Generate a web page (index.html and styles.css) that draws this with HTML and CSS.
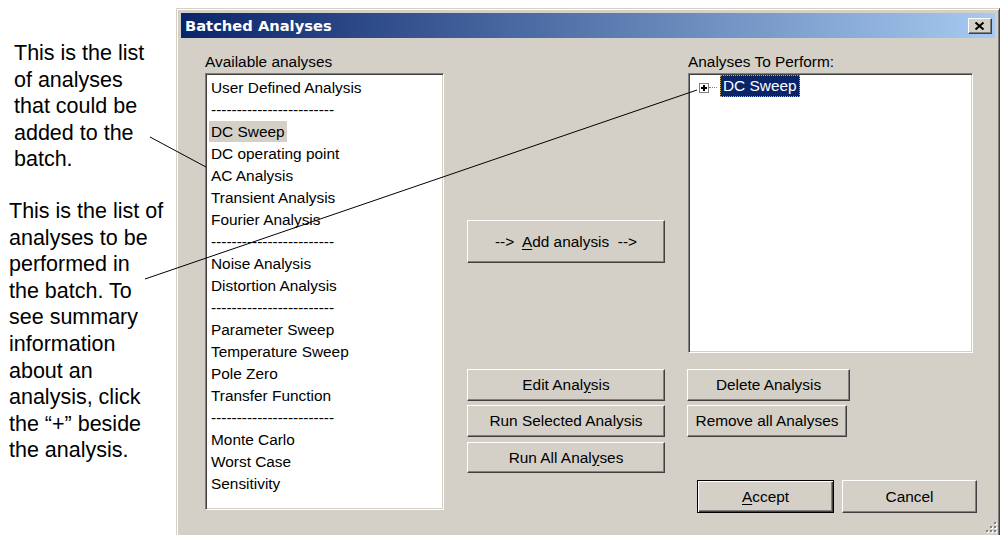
FILE: index.html
```html
<!DOCTYPE html>
<html lang="en">
	<head>
		<meta charset="UTF-8" />
		<meta name="viewport" content="width=device-width, initial-scale=1" />
		<title>Batched Analyses</title>
		<link rel="stylesheet" href="styles.css">
	</head>
	<body>
		<div class="page">
			<div class="notes">
				<p class="note note-first">
					This is the list<br />of analyses<br />that could be<br />added to the<br />batch.
				</p>
				<p class="note note-second">
					This is the list of<br />analyses to be<br />performed in<br />the batch. To<br />see summary<br />information<br />about an<br />analysis, click<br />the &ldquo;+&rdquo; beside<br />the analysis.
				</p>
			</div>

			<div class="dialog">
				<div class="titlebar">
					<span class="title">Batched Analyses</span>
					<button class="btn close" type="button">
						<svg width="22" height="14" viewBox="0 0 22 14">
							<path d="M6.5 3.5 L14.5 10.5 M14.5 3.5 L6.5 10.5" stroke="#000" stroke-width="2" fill="none" />
						</svg>
					</button>
				</div>

				<div class="content">
					<div class="caption caption-left">Available analyses</div>
					<div class="caption caption-right">Analyses To Perform:</div>

					<ul class="listbox">
						<li><span class="item">User Defined Analysis</span></li>
						<li><span class="item">------------------------</span></li>
						<li><span class="item picked">DC Sweep</span></li>
						<li><span class="item">DC operating point</span></li>
						<li><span class="item">AC Analysis</span></li>
						<li><span class="item">Transient Analysis</span></li>
						<li><span class="item">Fourier Analysis</span></li>
						<li><span class="item">------------------------</span></li>
						<li><span class="item">Noise Analysis</span></li>
						<li><span class="item">Distortion Analysis</span></li>
						<li><span class="item">------------------------</span></li>
						<li><span class="item">Parameter Sweep</span></li>
						<li><span class="item">Temperature Sweep</span></li>
						<li><span class="item">Pole Zero</span></li>
						<li><span class="item">Transfer Function</span></li>
						<li><span class="item">------------------------</span></li>
						<li><span class="item">Monte Carlo</span></li>
						<li><span class="item">Worst Case</span></li>
						<li><span class="item">Sensitivity</span></li>
					</ul>

					<div class="actions">
						<button class="btn btn-add" type="button">--&gt;&nbsp; <u>A</u>dd analysis&nbsp; --&gt;</button>
						<button class="btn btn-edit" type="button">Edit Anal<u>y</u>sis</button>
						<button class="btn btn-run" type="button">Run Selected Analysis</button>
						<button class="btn btn-run-all" type="button">Run All Anal<u>y</u>ses</button>
					</div>

					<div class="side">
						<div class="tree">
							<div class="node">
								<span class="expander"></span>
								<span class="connector"></span>
								<span class="node-label">DC Sweep</span>
							</div>
						</div>
						<button class="btn btn-delete" type="button">Delete Analysis</button>
						<button class="btn btn-remove" type="button">Remove all Analyses</button>
						<div class="dialog-buttons">
							<button class="btn btn-accept" type="button"><u>A</u>ccept</button>
							<button class="btn btn-cancel" type="button">Cancel</button>
						</div>
					</div>
				</div>

				<svg class="grip" width="14" height="14" viewBox="0 0 14 14">
					<g fill="#fff">
						<rect x="12" y="4" width="2" height="2" />
						<rect x="8" y="8" width="2" height="2" />
						<rect x="12" y="8" width="2" height="2" />
						<rect x="4" y="12" width="2" height="2" />
						<rect x="8" y="12" width="2" height="2" />
						<rect x="12" y="12" width="2" height="2" />
					</g>
					<g fill="#808080">
						<rect x="11" y="3" width="2" height="2" />
						<rect x="7" y="7" width="2" height="2" />
						<rect x="11" y="7" width="2" height="2" />
						<rect x="3" y="11" width="2" height="2" />
						<rect x="7" y="11" width="2" height="2" />
						<rect x="11" y="11" width="2" height="2" />
					</g>
				</svg>
			</div>

			<!-- callout lines from the notes into the dialog -->
			<svg class="leaders" width="1000" height="535" viewBox="0 0 1000 535">
				<line x1="150" y1="137" x2="206" y2="167" />
				<line x1="145" y1="279" x2="697" y2="90" />
			</svg>
		</div>
	</body>
</html>
```

FILE: styles.css
```css
body {
	margin: 0;
	background-color: #fff;
	font-family: 'Liberation Sans', Arial, sans-serif;
	color: #000;
}

.page {
	position: relative;
	display: flex;
	height: 535px;
	overflow: hidden;
}

/* notes on the left */

.notes {
	width: 176px;
	flex-shrink: 0;
	padding-top: 40px;
	box-sizing: border-box;
	font-size: 21.5px;
	line-height: 26.6px;
}

.note {
	margin: 0;
	white-space: nowrap;
}

.note-first {
	padding-left: 14px;
}

.note-second {
	margin-top: 25px;
	padding-left: 9px;
}

/* the window */

.dialog {
	position: relative;
	flex-shrink: 0;
	width: 824px;
	height: 529px;
	margin-top: 8px;
	padding: 4px;
	box-sizing: border-box;
	background-color: #d4d0c8;
	border: 1px solid;
	border-color: #d4d0c8 #404040 #404040 #d4d0c8;
	box-shadow: inset 1px 1px #fff, inset -1px -1px #808080;
}

.titlebar {
	display: flex;
	align-items: center;
	justify-content: space-between;
	height: 25px;
	padding: 0 3px 0 4px;
	background: linear-gradient(to right, #0a246a, #a6caf0);
}

.title {
	color: #fff;
	font-family: 'DejaVu Sans', sans-serif;
	font-weight: bold;
	font-size: 14.7px;
}

.btn {
	display: block;
	height: 32px;
	padding: 0;
	box-sizing: border-box;
	background-color: #d4d0c8;
	border: 1px solid;
	border-color: #fff #404040 #404040 #fff;
	box-shadow: inset -1px -1px #808080;
	font-family: 'Liberation Sans', Arial, sans-serif;
	font-size: 15.4px;
	color: #000;
}

.btn u {
	text-underline-offset: 2px;
}

.close {
	width: 24px;
	height: 16px;
	display: flex;
	align-items: center;
	justify-content: center;
}

.content {
	display: grid;
	grid-template-columns: 239px 198px 285px;
	grid-template-rows: 20px auto;
	column-gap: 23px;
	align-items: start;
	padding: 15px 0 0 24px;
	font-size: 15.4px;
}

.caption {
	line-height: 18px;
}

.caption-left {
	grid-column: 1;
	grid-row: 1;
}

.caption-right {
	grid-column: 3;
	grid-row: 1;
}

.listbox,
.tree {
	box-sizing: border-box;
	background-color: #fff;
	border: 1px solid;
	border-color: #808080 #fff #fff #808080;
	box-shadow: inset 1px 1px #404040, inset -1px -1px #d4d0c8;
}

.listbox {
	grid-column: 1;
	grid-row: 2;
	height: 437px;
	margin: 0;
	padding: 3px 0 0 1px;
	list-style: none;
}

.listbox li {
	height: 22px;
	line-height: 22px;
	padding-left: 2px;
	white-space: nowrap;
}

.item {
	display: inline-block;
	height: 21px;
	line-height: 21px;
	padding: 0 2px;
	vertical-align: top;
}

.picked {
	background-color: #d4d0c8;
}

/* middle buttons */

.actions {
	grid-column: 2;
	grid-row: 2;
	display: flex;
	flex-direction: column;
}

.btn-add {
	height: 43px;
	margin-top: 147px;
}

.btn-edit {
	margin-top: 106px;
}

.btn-run {
	margin-top: 4px;
}

.btn-run-all {
	height: 31px;
	margin-top: 5px;
}

/* right side */

.side {
	grid-column: 3;
	grid-row: 2;
	display: flex;
	flex-direction: column;
	align-items: flex-start;
}

.tree {
	width: 285px;
	height: 280px;
	padding: 1px;
}

.node {
	display: flex;
	align-items: flex-start;
	height: 22px;
	padding-left: 9px;
}

.expander {
	position: relative;
	width: 10px;
	height: 10px;
	margin-top: 8px;
	box-sizing: border-box;
	border: 1px solid #808080;
	background-color: #fff;
}

.expander::before,
.expander::after {
	content: '';
	position: absolute;
	background-color: #000;
}

.expander::before {
	left: 1px;
	top: 3px;
	width: 6px;
	height: 2px;
}

.expander::after {
	left: 3px;
	top: 1px;
	width: 2px;
	height: 6px;
}

.connector {
	width: 8px;
	margin-top: 12px;
	border-top: 1px dotted #808080;
}

.node-label {
	margin-left: 3px;
	padding: 0 2px;
	height: 22px;
	line-height: 20px;
	box-sizing: border-box;
	border: 1px dotted #c8b060;
	background-color: #0a246a;
	color: #fff;
}

.btn-delete {
	width: 163px;
	margin-top: 16px;
	margin-left: -1px;
}

.btn-remove {
	width: 160px;
	margin-top: 4px;
	margin-left: -1px;
}

.dialog-buttons {
	display: flex;
	gap: 8px;
	margin-top: 43px;
	padding-left: 9px;
}

.btn-accept {
	width: 137px;
	height: 33px;
	border-color: #000;
	box-shadow: inset 1px 1px #fff, inset -1px -1px #404040, inset -2px -2px #808080;
}

.btn-cancel {
	width: 135px;
	height: 33px;
}

.grip {
	position: absolute;
	right: 2px;
	bottom: 3px;
}

.leaders {
	position: absolute;
	left: 0;
	top: 0;
	pointer-events: none;
}

.leaders line {
	stroke: #000;
	stroke-width: 1;
}
```
